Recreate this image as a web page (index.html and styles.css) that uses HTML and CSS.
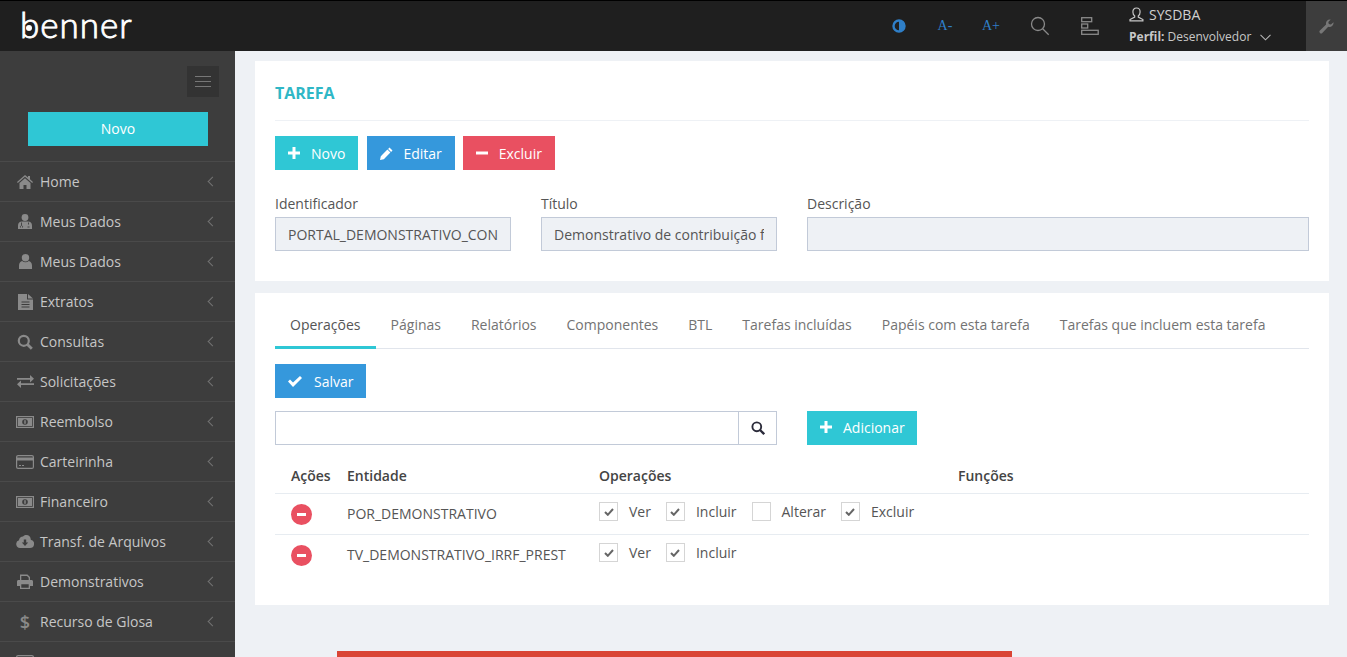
FILE: index.html
```html
<!DOCTYPE html>
<html lang="pt-BR">
<head>
	<meta charset="UTF-8">
	<title>Tarefa</title>
	<link rel="stylesheet" href="styles.css">
</head>
<body>
	<header class="topbar">
		<div class="logo"><span class="logo-text">benner</span><span class="logo-dot"></span></div>
		<div class="top-tools">
			<span class="tool tool-contrast">
				<svg width="14" height="14" viewBox="0 0 14 14"><circle cx="7" cy="7" r="5.5" fill="none" stroke="#2f7fc8" stroke-width="2.4"/><path d="M7 1.5a5.500 5.500 0 0 1 0 11z" fill="#2f7fc8"/></svg>
			</span>
			<span class="tool tool-font">A-</span>
			<span class="tool tool-font">A+</span>
			<span class="tool tool-search">
				<svg width="20" height="20" viewBox="0 0 20 20" fill="none" stroke="#8a8a8a" stroke-width="1.3"><circle cx="8" cy="8" r="6.500"/><path d="M12.700 12.700l6 6"/></svg>
			</span>
			<span class="tool tool-tree">
				<svg width="18" height="18" viewBox="0 0 18 18" fill="none" stroke="#8a8a8a" stroke-width="1.300"><rect x="0.700" y="0.700" width="10" height="4"/><rect x="0.700" y="7" width="6" height="4"/><rect x="0.700" y="13.300" width="16.500" height="4"/></svg>
			</span>
			<div class="user-box">
				<div class="user-name">
					<svg width="15" height="15" viewBox="0 0 15 15" fill="none" stroke="#c8c8c8" stroke-width="1.200"><path d="M7.500 1c2.300 0 3.600 1.700 3.600 3.900 0 1.700-.8 3.200-1.800 4v1.200l4.600 2.400v1.400H1v-1.400l4.700-2.400V8.900c-1-.8-1.800-2.300-1.800-4C3.900 2.700 5.200 1 7.500 1z"/></svg>
					<span>SYSDBA</span>
				</div>
				<div class="user-profile"><b>Perfil:</b> Desenvolvedor
					<svg class="user-caret" width="11" height="7" viewBox="0 0 11 7" fill="none" stroke="#b5b5b5" stroke-width="1.100"><path d="M.5.800l5 5 5-5"/></svg>
				</div>
			</div>
			<span class="wrench">
				<svg width="15" height="15" viewBox="0 0 15 15"><path d="M14.500 3.300a4 4 0 0 1-5.300 4.400L3.300 14a1.700 1.700 0 0 1-2.400-2.400l6.200-6A4 4 0 0 1 11.700.6L9.300 3l.5 2.100 2.100.5z" fill="#777"/></svg>
			</span>
		</div>
	</header>

	<div class="page">
		<nav class="sidebar">
			<div class="side-top">
				<span class="burger"><i></i><i></i><i></i></span>
			</div>
			<div class="side-new"><a class="new-btn">Novo</a></div>
			<ul class="menu">
				<li><span class="menu-ico"><svg width="16" height="14" viewBox="0 0 16 14"><path d="M8 0l3 2.600V1h2v3.300L16 7l-.8 1L8 1.800.8 8 0 7z M2.500 8L8 3.300 13.500 8v6H9.500v-4h-3v4h-4z" fill="#8a8a8a"/></svg></span>Home<span class="chev"></span></li>
				<li><span class="menu-ico"><svg width="14" height="15" viewBox="0 0 14 15"><circle cx="7" cy="3.500" r="3.400" fill="#8a8a8a"/><path d="M0 15v-3.500C0 9 1.800 7.600 3.800 7.600h6.400c2 0 3.800 1.400 3.800 3.900V15z" fill="#8a8a8a"/><path d="M3.500 8.500v2.500M10.500 8.500v2M2.500 13.500v-1.200l1-1 1 1v1.200M9.500 13h2" stroke="#3d3d3d" fill="none" stroke-width=".9"/></svg></span>Meus Dados<span class="chev"></span></li>
				<li><span class="menu-ico"><svg width="13" height="15" viewBox="0 0 13 15"><circle cx="6.500" cy="3.800" r="3.700" fill="#8a8a8a"/><path d="M0 15v-3.500C0 9 1.500 7.300 3.200 7c.9.800 2 1.200 3.300 1.200S8.900 7.800 9.800 7C11.500 7.300 13 9 13 11.500V15z" fill="#8a8a8a"/></svg></span>Meus Dados<span class="chev"></span></li>
				<li><span class="menu-ico"><svg width="15" height="16" viewBox="0 0 15 16"><path d="M0 0h9v5.500h6V16H0z" fill="#8a8a8a"/><path d="M10 0l5 4.500h-5z" fill="#8a8a8a"/><path d="M3.500 8h8M3.500 10.500h8M3.500 13h8" stroke="#3d3d3d"/></svg></span>Extratos<span class="chev"></span></li>
				<li><span class="menu-ico"><svg width="16" height="16" viewBox="0 0 16 16" fill="none" stroke="#8a8a8a"><circle cx="6.800" cy="6.800" r="5" stroke-width="2.200"/><path d="M10.500 10.500l4.300 4.300" stroke-width="2.800"/></svg></span>Consultas<span class="chev"></span></li>
				<li><span class="menu-ico"><svg width="17" height="13" viewBox="0 0 17 13" fill="#8a8a8a"><path d="M0 3h13V0l4 3.800-4 3.700V4.800H0z"/><path d="M17 8.200H4V5.500L0 9.200 4 13v-3h13z"/></svg></span>Solicitações<span class="chev"></span></li>
				<li><span class="menu-ico"><svg width="18" height="12" viewBox="0 0 18 12"><rect x=".6" y=".6" width="16.800" height="10.800" fill="none" stroke="#8a8a8a" stroke-width="1.200"/><path d="M2 2h14v8H2z" fill="#8a8a8a"/><circle cx="9" cy="6" r="2.800" fill="#3d3d3d"/><rect x="8.300" y="4.200" width="1.400" height="3.600" fill="#8a8a8a"/></svg></span>Reembolso<span class="chev"></span></li>
				<li><span class="menu-ico"><svg width="18" height="14" viewBox="0 0 18 14"><rect x=".6" y=".6" width="16.800" height="12.800" rx="1.500" fill="none" stroke="#8a8a8a" stroke-width="1.200"/><rect x="1" y="2.500" width="16" height="3" fill="#8a8a8a"/><path d="M3 10.500h2M6 10.500h2" stroke="#8a8a8a"/></svg></span>Carteirinha<span class="chev"></span></li>
				<li><span class="menu-ico"><svg width="18" height="12" viewBox="0 0 18 12"><rect x=".6" y=".6" width="16.800" height="10.800" fill="none" stroke="#8a8a8a" stroke-width="1.200"/><path d="M2 2h14v8H2z" fill="#8a8a8a"/><circle cx="9" cy="6" r="2.800" fill="#3d3d3d"/><rect x="8.300" y="4.200" width="1.400" height="3.600" fill="#8a8a8a"/></svg></span>Financeiro<span class="chev"></span></li>
				<li><span class="menu-ico"><svg width="18" height="13" viewBox="0 0 18 13"><path d="M4 13a4 4 0 0 1-1-7.800C3.200 2.800 5 1.400 7 1.400 8.200.400 9.300 0 10.300 0c2.600 0 4.500 2 4.500 4.700A4.200 4.200 0 0 1 14 13z" fill="#8a8a8a"/><path d="M7.800 4.500h2.400v3h2L9 11 5.800 7.500h2z" fill="#3d3d3d"/></svg></span>Transf. de Arquivos<span class="chev"></span></li>
				<li><span class="menu-ico"><svg width="16" height="15" viewBox="0 0 16 15" fill="#8a8a8a"><path d="M3 6V.6h7.500L13 3v3h-1.300V3.700L10 1.900H4.300V6z"/><path d="M0 7.500C0 6.500.7 6 1.500 6h13c.8 0 1.500.5 1.500 1.500V12h-3v3H3v-3H0zM4.300 10.300v3.400h7.400v-3.400z"/></svg></span>Demonstrativos<span class="chev"></span></li>
				<li><span class="menu-ico menu-dollar">$</span>Recurso de Glosa<span class="chev"></span></li>
				<li><span class="menu-ico"><svg width="18" height="14" viewBox="0 0 18 14"><rect x=".6" y=".6" width="16.800" height="12.800" rx="1.500" fill="none" stroke="#8a8a8a" stroke-width="1.200"/></svg></span></li>
			</ul>
		</nav>

		<main class="content">
			<section class="card card-task">
				<h1 class="card-title">TAREFA</h1>
				<div class="btn-row">
					<a class="btn btn-teal"><svg class="btn-ico" width="12" height="12" viewBox="0 0 12 12"><path d="M4.500 0h3v4.500H12v3H7.500V12h-3V7.500H0v-3h4.500z" fill="#fff"/></svg>Novo</a>
					<a class="btn btn-blue btn-edit"><svg class="btn-ico" width="13" height="13" viewBox="0 0 13 13"><path d="M9.500.5l3 3-1.400 1.400-3-3zM7.400 2.600l3 3L3.800 12.200 0 13l.8-3.800z" fill="#fff"/></svg>Editar</a>
					<a class="btn btn-red"><svg class="btn-ico" width="12" height="12" viewBox="0 0 12 12"><path d="M0 4.500h12v3H0z" fill="#fff"/></svg>Excluir</a>
				</div>
				<div class="fields">
					<label class="field">Identificador<input class="field-input" type="text" readonly value="PORTAL_DEMONSTRATIVO_CONSULTA"></label>
					<label class="field">Título<input class="field-input" type="text" readonly value="Demonstrativo de contribuição fiscal"></label>
					<label class="field">Descrição<input class="field-input" type="text" readonly value=""></label>
				</div>
			</section>

			<section class="card card-ops">
				<div class="tabs">
					<a class="tab tab-active">Operações</a>
					<a class="tab">Páginas</a>
					<a class="tab">Relatórios</a>
					<a class="tab">Componentes</a>
					<a class="tab">BTL</a>
					<a class="tab">Tarefas incluídas</a>
					<a class="tab">Papéis com esta tarefa</a>
					<a class="tab">Tarefas que incluem esta tarefa</a>
				</div>
				<div class="save-row">
					<a class="btn btn-blue btn-save"><svg class="btn-ico" width="14" height="11" viewBox="0 0 14 11"><path d="M0 5.500l2-2 3 3L12 0l2 2-9 9z" fill="#fff"/></svg>Salvar</a>
				</div>
				<div class="search-row">
					<div class="search-group">
						<input class="search-input" type="text">
						<span class="search-addon"><svg width="14" height="14" viewBox="0 0 14 14" fill="none" stroke="#2b2b3a"><circle cx="5.800" cy="5.800" r="4.400" stroke-width="1.900"/><path d="M9 9l4.200 4.200" stroke-width="2.300"/></svg></span>
					</div>
					<a class="btn btn-teal btn-add"><svg class="btn-ico" width="12" height="12" viewBox="0 0 12 12"><path d="M4.500 0h3v4.500H12v3H7.500V12h-3V7.500H0v-3h4.500z" fill="#fff"/></svg>Adicionar</a>
				</div>
				<table class="ops-table">
					<thead>
						<tr><th class="col-act">Ações</th><th class="col-ent">Entidade</th><th class="col-ops">Operações</th><th>Funções</th></tr>
					</thead>
					<tbody>
						<tr>
							<td><span class="remove"></span></td>
							<td>POR_DEMONSTRATIVO</td>
							<td>
								<div class="checks">
									<span class="check check-on">Ver</span>
									<span class="check check-on">Incluir</span>
									<span class="check">Alterar</span>
									<span class="check check-on">Excluir</span>
								</div>
							</td>
							<td></td>
						</tr>
						<tr>
							<td><span class="remove"></span></td>
							<td>TV_DEMONSTRATIVO_IRRF_PREST</td>
							<td>
								<div class="checks">
									<span class="check check-on">Ver</span>
									<span class="check check-on">Incluir</span>
								</div>
							</td>
							<td></td>
						</tr>
					</tbody>
				</table>
			</section>

			<div class="red-bar"></div>
		</main>
	</div>
</body>
</html>
```

FILE: styles.css
```css
*, *::before, *::after { box-sizing: border-box; }
html, body { height: 100%; }
body {
	margin: 0;
	overflow: hidden;
	background: #eef1f5;
	color: #555;
	font-family: "Open Sans", "Liberation Sans", sans-serif;
	font-size: 14px;
}

/* barra do topo */
.topbar {
	display: flex;
	height: 51px;
	background: #1f1f1f;
	border-top: 1px solid #000;
}
.logo {
	position: relative;
	width: 235px;
	padding-left: 20px;
}
.logo-text {
	color: #fff;
	font-family: "Lato", "Open Sans", sans-serif;
	font-size: 35px;
	font-weight: 300;
	line-height: 46px;
	letter-spacing: 1px;
	-webkit-text-stroke: 0.9px #fff;
}
.logo-dot {
	position: absolute;
	left: 26px;
	top: 24px;
	width: 6px;
	height: 6px;
	border-radius: 50%;
	background: #fff;
}
.top-tools {
	display: flex;
	flex: 1;
	align-items: center;
	justify-content: flex-end;
	height: 50px;
}
.tool {
	display: flex;
	justify-content: center;
	align-items: center;
	width: 46px;
	height: 50px;
}
.tool-font {
	color: #2f7fc8;
	font-family: "Liberation Serif", serif;
	font-size: 14px;
}
.tool-search { width: 52px; }
.tool-tree { width: 48px; }
.user-box {
	width: 192px;
	padding-left: 15px;
	color: #c8c8c8;
}
.user-name {
	display: flex;
	align-items: center;
	gap: 5px;
	height: 20px;
	margin-top: -1px;
	color: #d0d0d0;
	font-size: 14px;
}
.user-profile {
	height: 20px;
	margin-top: 2px;
	font-size: 12px;
	line-height: 20px;
	white-space: nowrap;
}
.user-caret { margin-left: 6px; }
.wrench {
	display: flex;
	justify-content: center;
	align-items: center;
	width: 41px;
	height: 50px;
	background: #3d3d3d;
}

/* menu lateral */
.page {
	display: flex;
	height: calc(100% - 51px);
}
.sidebar {
	flex: none;
	width: 235px;
	overflow: hidden;
	background: #3d3d3d;
}
.side-top {
	display: flex;
	justify-content: flex-end;
	padding: 15px 16px 0 0;
}
.burger {
	display: flex;
	flex-direction: column;
	justify-content: center;
	gap: 4px;
	width: 32px;
	height: 31px;
	padding: 0 8px;
	background: #333;
}
.burger i {
	display: block;
	height: 1px;
	background: #777;
}
.side-new { padding: 15px 27px 15px 28px; }
.new-btn {
	display: block;
	height: 34px;
	background: #2fc7d5;
	color: #fff;
	line-height: 34px;
	text-align: center;
}
.menu {
	margin: 0;
	padding: 0;
	list-style: none;
}
.menu li {
	display: flex;
	align-items: center;
	height: 40px;
	padding-left: 10px;
	border-top: 1px solid #4a4a4a;
	color: #c6c6c6;
}
.menu-ico {
	display: flex;
	flex: none;
	justify-content: center;
	align-items: center;
	width: 30px;
}
.menu-dollar {
	color: #8a8a8a;
	font-size: 18px;
	font-weight: 600;
}
.chev {
	width: 7px;
	height: 7px;
	margin-left: auto;
	margin-right: 19px;
	border-left: 1px solid #737373;
	border-bottom: 1px solid #737373;
	transform: rotate(45deg);
}

/* conteudo */
.content {
	flex: 1;
	min-width: 0;
	padding: 10px 18px 0 20px;
}
.card {
	padding: 20px;
	background: #fff;
}
.card-task { height: 220px; }
.card-ops {
	height: 312px;
	margin-top: 12px;
	padding-top: 12px;
}
.card-title {
	height: 40px;
	margin: 0 0 15px;
	border-bottom: 1px solid #eef1f5;
	color: #2fb7c6;
	font-size: 16px;
	font-weight: 700;
	line-height: 24px;
}
.btn {
	display: inline-flex;
	align-items: center;
	height: 34px;
	padding: 0 13px;
	color: #fff;
}
.btn-ico { margin-right: 11px; }
.btn-teal { background: #2fc7d5; }
.btn-blue { background: #3598dc; }
.btn-red { background: #e95061; }
.btn-row {
	display: flex;
	gap: 8px;
}
.btn-row .btn-edit { margin-left: 1px; }
.btn-edit .btn-ico { margin-right: 10px; }
.fields {
	display: grid;
	grid-template-columns: 236px 236px 1fr;
	gap: 30px;
	margin-top: 24px;
}
.field {
	display: block;
	line-height: 19px;
}
.field-input {
	display: block;
	width: 100%;
	height: 34px;
	margin-top: 4px;
	padding: 0 12px;
	border: 1px solid #c2cad8;
	background: #eef1f5;
	color: #555;
	font: inherit;
	outline: none;
}

.tabs {
	display: flex;
	height: 44px;
	border-bottom: 1px solid #e1e5ec;
}
.tab {
	height: 44px;
	padding: 0 15px;
	color: #737373;
	line-height: 40px;
}
.tab-active {
	width: 100.6px;
	border-bottom: 3px solid #2fc7d5;
	color: #555;
}
.save-row { margin-top: 15px; }
.btn-save .btn-ico { margin-right: 12px; }
.search-row {
	display: flex;
	gap: 30px;
	margin-top: 13px;
}
.search-group {
	display: flex;
	width: 502px;
	height: 34px;
}
.search-input {
	flex: 1;
	min-width: 0;
	border: 1px solid #c2cad8;
	background: #fff;
	outline: none;
}
.search-addon {
	display: flex;
	justify-content: center;
	align-items: center;
	width: 38px;
	border: 1px solid #c2cad8;
	border-left: 0;
}
.btn-add { padding: 0 12px 2px 13px; }

.ops-table {
	width: 100%;
	margin-top: 14px;
	border-collapse: collapse;
	table-layout: fixed;
}
.ops-table th {
	height: 34px;
	padding: 0 16px;
	border-bottom: 1px solid #e7ecf1;
	color: #444;
	font-weight: 600;
	text-align: left;
}
.ops-table td {
	height: 41px;
	padding: 0 16px;
	border-bottom: 1px solid #e7ecf1;
	color: #555;
	vertical-align: middle;
}
.ops-table tr:last-child td { border-bottom: 0; }
.col-act { width: 56px; }
.col-ent { width: 252px; }
.col-ops { width: 359px; }
.remove {
	display: block;
	position: relative;
	width: 21px;
	height: 21px;
	margin-top: 1px;
	border-radius: 50%;
	background: #e95061;
}
.remove::after {
	content: "";
	position: absolute;
	left: 6px;
	top: 9px;
	width: 9px;
	height: 3px;
	background: #fff;
}
.checks {
	display: flex;
	gap: 15px;
	margin-top: -4px;
}
.check {
	display: flex;
	align-items: center;
	gap: 11px;
}
.check::before {
	content: "";
	flex: none;
	width: 19px;
	height: 19px;
	border: 1px solid #d5d5d5;
	background-position: center;
	background-repeat: no-repeat;
}
.check-on::before {
	background-image: url("data:image/svg+xml,%3Csvg xmlns='http://www.w3.org/2000/svg' width='10' height='8' viewBox='0 0 10 8'%3E%3Cpath d='M1 4l2.800 2.800L9 1' fill='none' stroke='%23666' stroke-width='2'/%3E%3C/svg%3E");
}
.red-bar {
	width: 675px;
	height: 30px;
	margin: 46px 0 0 82px;
	background: #d94535;
}
```
